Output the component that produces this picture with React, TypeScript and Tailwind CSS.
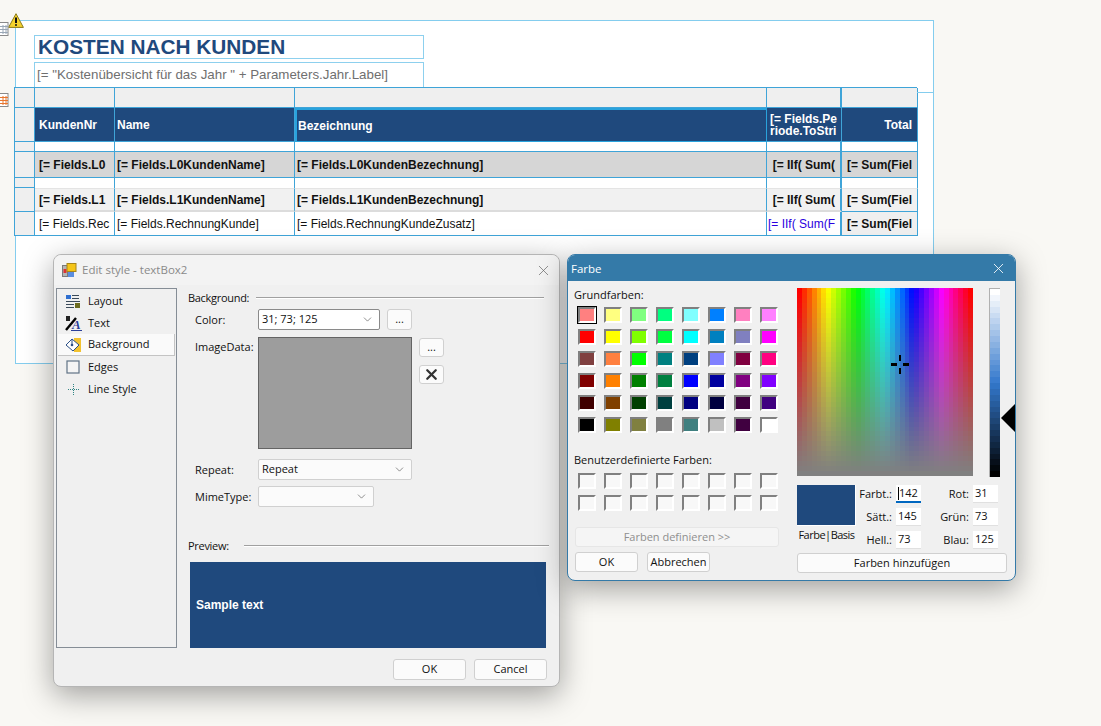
import { ChevronDown, X } from "lucide-react";
import type { ReactNode } from "react";

const basic = [
  "#ff8080", "#ffff80", "#80ff80", "#00ff80", "#80ffff", "#0080ff", "#ff80c0", "#ff80ff",
  "#ff0000", "#ffff00", "#80ff00", "#00ff40", "#00ffff", "#0080c0", "#8080c0", "#ff00ff",
  "#804040", "#ff8040", "#00ff00", "#008080", "#004080", "#8080ff", "#800040", "#ff0080",
  "#800000", "#ff8000", "#008000", "#008040", "#0000ff", "#0000a0", "#800080", "#8000ff",
  "#400000", "#804000", "#004000", "#004040", "#000080", "#000040", "#400040", "#400080",
  "#000000", "#808000", "#808040", "#808080", "#408080", "#c0c0c0", "#400040", "#ffffff",
];

const sections = ["Layout", "Text", "Background", "Edges", "Line Style"];

type CellProps = { children?: ReactNode; className?: string };

const Cell = ({ children, className = "" }: CellProps) => (
  <div className={`flex min-w-0 items-center overflow-hidden whitespace-nowrap border-r border-b border-[#3fa4d8] ${className}`}>
    {children}
  </div>
);

const Gutter = () => <div className="border-r border-b border-[#3fa4d8] bg-[#efefef]" />;

const ReportTable = () => (
  <div className="-ml-[20px] grid w-[903px] grid-cols-[20px_80px_180px_472px_75px_76px] grid-rows-[20px_34px_10px_26px_10px_24px_24px] border-t border-l border-[#3fa4d8] font-['Liberation_Sans',sans-serif] text-[12px] font-bold text-[#111]">
    <Gutter />
    <Cell className="bg-[#efefef]" />
    <Cell className="bg-[#efefef]" />
    <Cell className="bg-[#efefef]" />
    <Cell className="border-r-2 bg-[#efefef]" />
    <Cell className="bg-[#efefef]" />

    <Gutter />
    <Cell className="bg-[#1f497d] pl-[4px] text-white">KundenNr</Cell>
    <Cell className="bg-[#1f497d] pl-[2px] text-white">Name</Cell>
    <Cell className="border-2 border-[#29a3dd] bg-[#1f497d] pl-[1px] text-white">Bezeichnung</Cell>
    <Cell className="flex-col items-start justify-center bg-[#1f497d] pl-[3px] leading-[12px] text-white">
      <span>[= Fields.Pe</span>
      <span>riode.ToStri</span>
    </Cell>
    <Cell className="justify-end bg-[#1f497d] pr-[5px] text-white">Total</Cell>

    <Gutter />
    <Cell className="bg-white" />
    <Cell className="bg-white" />
    <Cell className="bg-white" />
    <Cell className="border-r-2 bg-white" />
    <Cell className="bg-white" />

    <Gutter />
    <Cell className="bg-[#d6d6d6] pl-[4px]">[= Fields.L0</Cell>
    <Cell className="bg-[#d6d6d6] pl-[2px]">[= Fields.L0KundenName]</Cell>
    <Cell className="bg-[#d6d6d6] pl-[2px]">[= Fields.L0KundenBezechnung]</Cell>
    <Cell className="justify-end border-r-2 bg-[#d6d6d6] pr-[5px]">[= IIf( Sum(</Cell>
    <Cell className="bg-[#d6d6d6] pl-[5px]">[= Sum(Fiel</Cell>

    <Gutter />
    <Cell className="border-b-0 bg-white" />
    <Cell className="border-b-0 bg-white" />
    <Cell className="border-b-0 bg-white" />
    <Cell className="border-r-2 border-b-0 bg-white" />
    <Cell className="border-b-0 bg-white" />

    <Gutter />
    <Cell className="border-t border-b-2 border-t-[#e4e4e4] border-b-[#dcdcdc] bg-[#f1f1f1] pl-[4px]">[= Fields.L1</Cell>
    <Cell className="border-t border-b-2 border-t-[#e4e4e4] border-b-[#dcdcdc] bg-[#f1f1f1] pl-[2px]">[= Fields.L1KundenName]</Cell>
    <Cell className="border-t border-b-2 border-t-[#e4e4e4] border-b-[#dcdcdc] bg-[#f1f1f1] pl-[2px]">[= Fields.L1KundenBezechnung]</Cell>
    <Cell className="justify-end border-t border-r-2 border-b-2 border-t-[#e4e4e4] border-b-[#dcdcdc] bg-[#f1f1f1] pr-[5px]">[= IIf( Sum(</Cell>
    <Cell className="border-t border-t-[#e4e4e4] bg-[#f1f1f1] pl-[5px]">[= Sum(Fiel</Cell>

    <Gutter />
    <Cell className="bg-white pl-[4px] font-normal">[= Fields.Rec</Cell>
    <Cell className="bg-white pl-[2px] font-normal">[= Fields.RechnungKunde]</Cell>
    <Cell className="bg-white pl-[2px] font-normal">[= Fields.RechnungKundeZusatz]</Cell>
    <Cell className="justify-end border-r-2 bg-white pr-[5px] font-normal text-[#2a00e0]">[= IIf( Sum(F</Cell>
    <Cell className="bg-[#efefef] pl-[5px]">[= Sum(Fiel</Cell>
  </div>
);

const SectionIcon = ({ name }: { name: string }) => {
  if (name === "Layout") {
    return (
      <svg width="16" height="15" viewBox="0 0 16 15">
        <rect x="1" y="1" width="5" height="4" fill="#2f6fd0" />
        <path d="M7 1.5h7M7 4.5h7M1 7.5h14M1 10.5h8M1 13.5h8" stroke="#3a4a5a" />
        <rect x="10" y="9" width="5" height="5" fill="#6b6b1f" />
      </svg>
    );
  }
  if (name === "Text") {
    return (
      <svg width="17" height="15" viewBox="0 0 17 15">
        <path d="M1 14 11 2" stroke="#000" strokeWidth="2.4" />
        <rect x="1" y="0" width="4" height="5" fill="#222" />
        <text x="7" y="13" fontFamily="Liberation Serif, serif" fontSize="13" fontWeight="700" fontStyle="italic" fill="#2a3f9a">A</text>
        <path d="M6 14.5h11" stroke="#2a3f9a" />
      </svg>
    );
  }
  if (name === "Background") {
    return (
      <svg width="17" height="16" viewBox="0 0 17 16">
        <rect x="9" y="1" width="7" height="14" fill="#f2c230" />
        <path d="M1 8 7 2l7 6-6 6z" fill="#fff" stroke="#2b4f86" />
        <path d="M7 2v6" stroke="#2b4f86" />
        <circle cx="7" cy="8" r="1.3" fill="#2b4f86" />
      </svg>
    );
  }
  if (name === "Edges") {
    return (
      <svg width="14" height="14" viewBox="0 0 14 14">
        <rect x="1" y="1" width="12" height="12" fill="#f4f4f4" stroke="#5f7285" strokeWidth="1.2" />
      </svg>
    );
  }
  return (
    <svg width="11" height="11" viewBox="0 0 11 11">
      <path d="M5.5 0v11M0 5.5h11" stroke="#2f8585" strokeDasharray="1 1" />
    </svg>
  );
};

const EditButton = ({ children, className = "" }: CellProps) => (
  <div className={`flex items-center justify-center rounded-[3px] border border-[#d0d0d0] bg-[#fbfbfb] text-[#111] ${className}`}>
    {children}
  </div>
);

const Combo = ({ value, className = "" }: { value?: string; className?: string }) => (
  <div className={`flex h-[21px] items-center justify-between rounded-[2px] border pr-[5px] pl-[3px] ${className}`}>
    <span>{value}</span>
    <ChevronDown size={13} strokeWidth={1} className="text-[#333]" />
  </div>
);

const GroupHeader = ({ title, className = "" }: { title: string; className?: string }) => (
  <div className={`flex h-[16px] items-center ${className}`}>
    <span className="tracking-[-0.3px]">{title}</span>
    <div className="h-[2px] flex-1 border-t border-b border-t-[#a0a0a0] border-b-white" />
  </div>
);

const EditStyleDialog = () => (
  <section className="absolute top-[254px] left-[53px] flex h-[433px] w-[507px] flex-col rounded-[8px] border border-[#b5b5b5] bg-[#f0f0f0] font-['Open_Sans',sans-serif] text-[11px] text-[#111] shadow-[0_8px_30px_rgba(0,0,0,0.36)]">
    <header className="flex h-[30px] items-center justify-between rounded-t-[8px] bg-[#f3f3f3] pr-[7px] pl-[8px]">
      <div className="flex items-center gap-[5px]">
        <svg width="15" height="15" viewBox="0 0 15 15">
          <rect x="0.5" y="2.5" width="5" height="11" fill="#b5b5b5" stroke="#7a7a7a" />
          <rect x="1.5" y="6" width="3" height="4" fill="#d33" />
          <rect x="5" y="0.5" width="9" height="8" fill="#f5c518" stroke="#a8861a" />
          <rect x="6" y="9" width="6" height="5" fill="#5b8ee0" />
        </svg>
        <span className="text-[11.5px] text-[#8a8a8a]">Edit style - textBox2</span>
      </div>
      <X size={17} strokeWidth={1} className="text-[#666]" />
    </header>

    <div className="mt-[3px] flex">
      <nav className="ml-[2px] flex h-[360px] w-[121px] flex-col border border-[#858d96] bg-[#f0f0f0] pt-[1px]">
        {sections.map((name) => (
          <div
            key={name}
            className={`flex h-[22px] items-center ${
              name === "Background" ? "mx-[1px] border-r border-b border-[#c4c4c4] bg-[#fafafa]" : "mx-[1px]"
            }`}
          >
            <span className="flex w-[30px] justify-center"><SectionIcon name={name} /></span>
            <span>{name}</span>
          </div>
        ))}
      </nav>

      <div className="ml-[11px] flex w-[361px] flex-col">
        <GroupHeader title="Background:" className="mt-[2px] w-[356px] gap-[7px]" />

        <div className="mt-[3px] flex items-center">
          <span className="w-[70px] pt-[1px] pl-[7px]">Color:</span>
          <Combo value="31; 73; 125" className="w-[122px] border-[#8a8a8a] bg-white" />
          <EditButton className="ml-[7px] h-[21px] w-[25px] border-[#0067c0] text-[#000080]">...</EditButton>
        </div>

        <div className="mt-[7px] flex items-start">
          <span className="w-[70px] pt-[2px] pl-[7px]">ImageData:</span>
          <div className="h-[112px] w-[154px] border border-[#646464] bg-[#9d9d9d]" />
          <div className="mt-[1px] ml-[7px] flex flex-col gap-[8px]">
            <EditButton className="h-[19px] w-[25px] text-[#000080]">...</EditButton>
            <EditButton className="h-[19px] w-[25px]">
              <X size={17} strokeWidth={3.2} className="text-[#333]" />
            </EditButton>
          </div>
        </div>

        <div className="mt-[10px] flex items-center">
          <span className="w-[70px] pt-[1px] pl-[7px]">Repeat:</span>
          <Combo value="Repeat" className="w-[154px] border-[#d0d0d0] bg-[#fbfbfb]" />
        </div>

        <div className="mt-[6px] flex items-center">
          <span className="w-[70px] pt-[1px] pl-[7px]">MimeType:</span>
          <Combo className="w-[116px] border-[#d0d0d0] bg-[#fbfbfb]" />
        </div>

        <GroupHeader title="Preview:" className="mt-[31px] gap-[15px]" />

        <div className="mt-[8px] ml-[2px] flex h-[86px] w-[356px] items-center bg-[#1f497d] pl-[6px] font-['Liberation_Sans',sans-serif] text-[12px] font-bold text-white">
          Sample text
        </div>
      </div>
    </div>

    <footer className="mt-[11px] flex justify-end gap-[8px] pr-[12px]">
      <EditButton className="h-[21px] w-[73px]">OK</EditButton>
      <EditButton className="h-[21px] w-[73px]">Cancel</EditButton>
    </footer>
  </section>
);

const Swatch = ({ color, selected }: { color: string; selected?: boolean }) => (
  <div className={`h-[16px] w-[18px] border-2 border-t-[#808080] border-r-white border-b-white border-l-[#808080] ${selected ? "outline outline-1 outline-black" : ""}`} style={{ backgroundColor: color }} />
);

const Spectrum = () => {
  const cols = 36;
  const rows = 38;
  const cells = [];
  for (let r = 0; r < rows; r++) {
    for (let c = 0; c < cols; c++) {
      cells.push(
        <rect
          key={`${r}-${c}`}
          x={c}
          y={r}
          width="1"
          height="1"
          fill={`hsl(${(c / (cols - 1)) * 360} ${100 - (r / (rows - 1)) * 100}% 50%)`}
        />,
      );
    }
  }
  return (
    <svg width="176" height="188" viewBox={`0 0 ${cols} ${rows}`} preserveAspectRatio="none" shapeRendering="crispEdges" className="block">
      {cells}
    </svg>
  );
};

const LumBar = () => {
  const rows = 32;
  return (
    <svg width="10" height="188" viewBox={`0 0 1 ${rows}`} preserveAspectRatio="none" shapeRendering="crispEdges" className="block">
      {Array.from({ length: rows }, (_, r) => (
        <rect key={r} x="0" y={r} width="1" height="1" fill={`hsl(213 60% ${100 - (r / (rows - 1)) * 100}%)`} />
      ))}
    </svg>
  );
};

const NumField = ({ value, active }: { value: string; active?: boolean }) => (
  <div className={`flex h-[18px] w-[25px] items-center bg-white pl-[2px] text-[#111] ${active ? "border-b-2 border-[#0067c0]" : "border-b border-[#e0e0e0]"}`}>
    {active && <span className="h-[13px] border-l border-black" />}
    {value}
  </div>
);

const FieldLabel = ({ children }: { children: ReactNode }) => (
  <span className="pr-[4px] text-right">{children}</span>
);

const ColorDialog = () => (
  <section className="absolute top-[254px] left-[567px] flex h-[327px] w-[449px] flex-col rounded-[8px] border border-[#347aa8] bg-[#f0f0f0] font-['Open_Sans',sans-serif] text-[11px] text-[#111] shadow-[0_8px_30px_rgba(0,0,0,0.36)]">
    <header className="flex h-[26px] items-center justify-between rounded-t-[7px] bg-[#347aa8] pt-[1px] pr-[8px] pl-[3px] text-[11.5px] text-white">
      <span>Farbe</span>
      <X size={17} strokeWidth={1.2} />
    </header>

    <div className="flex">
      <div className="ml-[6px] flex w-[223px] flex-col">
        <div className="mt-[6px] h-[16px]">Grundfarben:</div>
        <div className="mt-[4px] ml-[4px] grid grid-cols-[repeat(8,18px)] gap-x-[8px] gap-y-[6px]">
          {basic.map((color, i) => (
            <Swatch key={i} color={color} selected={i === 0} />
          ))}
        </div>
        <div className="mt-[19px] h-[16px]">Benutzerdefinierte Farben:</div>
        <div className="mt-[5px] ml-[4px] grid grid-cols-[repeat(8,18px)] gap-x-[8px] gap-y-[6px]">
          {Array.from({ length: 16 }, (_, i) => (
            <Swatch key={i} color="#f8f8f8" />
          ))}
        </div>
        <div className="mt-[16px] ml-[1px] flex h-[20px] w-[204px] items-center justify-center rounded-[3px] border border-[#e6e6e6] bg-[#f5f5f5] text-[#8f8f8f]">
          Farben definieren &gt;&gt;
        </div>
        <div className="mt-[5px] ml-[1px] flex gap-[9px]">
          <EditButton className="h-[20px] w-[63px]">OK</EditButton>
          <EditButton className="h-[20px] w-[63px]">Abbrechen</EditButton>
        </div>
      </div>

      <div className="mt-[7px] flex flex-col">
        <div className="relative flex">
          <div className="relative">
            <Spectrum />
            <div className="absolute top-[67px] left-[102px] h-[6px] w-[2px] bg-black" />
            <div className="absolute top-[80px] left-[102px] h-[6px] w-[2px] bg-black" />
            <div className="absolute top-[75px] left-[94px] h-[3px] w-[6px] bg-black" />
            <div className="absolute top-[75px] left-[106px] h-[3px] w-[6px] bg-black" />
          </div>
          <div className="ml-[16px] border-t border-l border-[#b0b0b0]"><LumBar /></div>
          <div className="absolute top-[116px] left-[204px] h-0 w-0 border-y-[14px] border-r-[14px] border-y-transparent border-r-black" />
        </div>

        <div className="mt-[8px] flex">
          <div className="flex w-[59px] flex-col items-center">
            <div className="h-[41px] w-[59px] border-r border-b border-white bg-[#1f497d]" />
            <span className="mt-[1px] whitespace-nowrap tracking-[-0.5px]">Farbe|Basis</span>
          </div>
          <div className="grid grid-cols-[40px_25px_52px_25px] items-center gap-y-[5px]">
            <FieldLabel>Farbt.:</FieldLabel>
            <NumField value="142" active />
            <FieldLabel>Rot:</FieldLabel>
            <NumField value="31" />
            <FieldLabel>Sätt.:</FieldLabel>
            <NumField value="145" />
            <FieldLabel>Grün:</FieldLabel>
            <NumField value="73" />
            <FieldLabel>Hell.:</FieldLabel>
            <NumField value="73" />
            <FieldLabel>Blau:</FieldLabel>
            <NumField value="125" />
          </div>
        </div>

        <EditButton className="mt-[4px] h-[20px] w-[210px]">Farben hinzufügen</EditButton>
      </div>
    </div>
  </section>
);

const WarningIcon = () => (
  <svg width="16" height="15" viewBox="0 0 16 15" className="absolute top-[13px] left-[8px]">
    <path d="M8 .7 15.4 14.4H.6z" fill="#f6d32d" stroke="#8a7a1a" />
    <path d="M8 4.5v5.5" stroke="#111" strokeWidth="2" />
    <circle cx="8" cy="12" r="1" fill="#111" />
  </svg>
);

const ReportIcon = ({ accent, className }: { accent: string; className: string }) => (
  <svg width="9" height="15" viewBox="0 0 9 15" className={`absolute left-0 ${className}`}>
    <rect x="-3" y="1.5" width="11" height="13" fill="#fff" stroke="#8a8a8a" />
    <path d="M0 5.5h8M0 8.5h8M0 11.5h8M3 4v9M6 4v9" stroke={accent} />
  </svg>
);

const App = () => (
  <main className="relative h-[726px] w-[1101px] overflow-hidden bg-[#f9f8f4]">
    <div className="absolute top-[20px] left-[15px] h-[344px] w-[919px] border border-[#84cdee] bg-white pt-[14px] pl-[18px]">
      <div className="flex h-[24px] w-[390px] items-center border border-[#8dd0ee] pl-[3px] font-['Liberation_Sans',sans-serif] text-[20.8px] font-bold text-[#1f497d]">
        KOSTEN NACH KUNDEN
      </div>
      <div className="mt-[3px] flex h-[25px] w-[390px] items-center border-x border-t border-[#8dd0ee] pl-[2px] font-['Liberation_Sans',sans-serif] text-[13.33px] text-[#6f6f6f]">
        [= "Kostenübersicht für das Jahr " + Parameters.Jahr.Label]
      </div>
      <ReportTable />
      <div className="absolute top-[71px] left-[901px] h-px w-[16px] bg-[#84cdee]" />
    </div>

    <WarningIcon />
    <ReportIcon accent="#9aa7b5" className="top-[21px]" />
    <ReportIcon accent="#e8772e" className="top-[92px]" />

    <EditStyleDialog />
    <ColorDialog />
  </main>
);

export default App;
